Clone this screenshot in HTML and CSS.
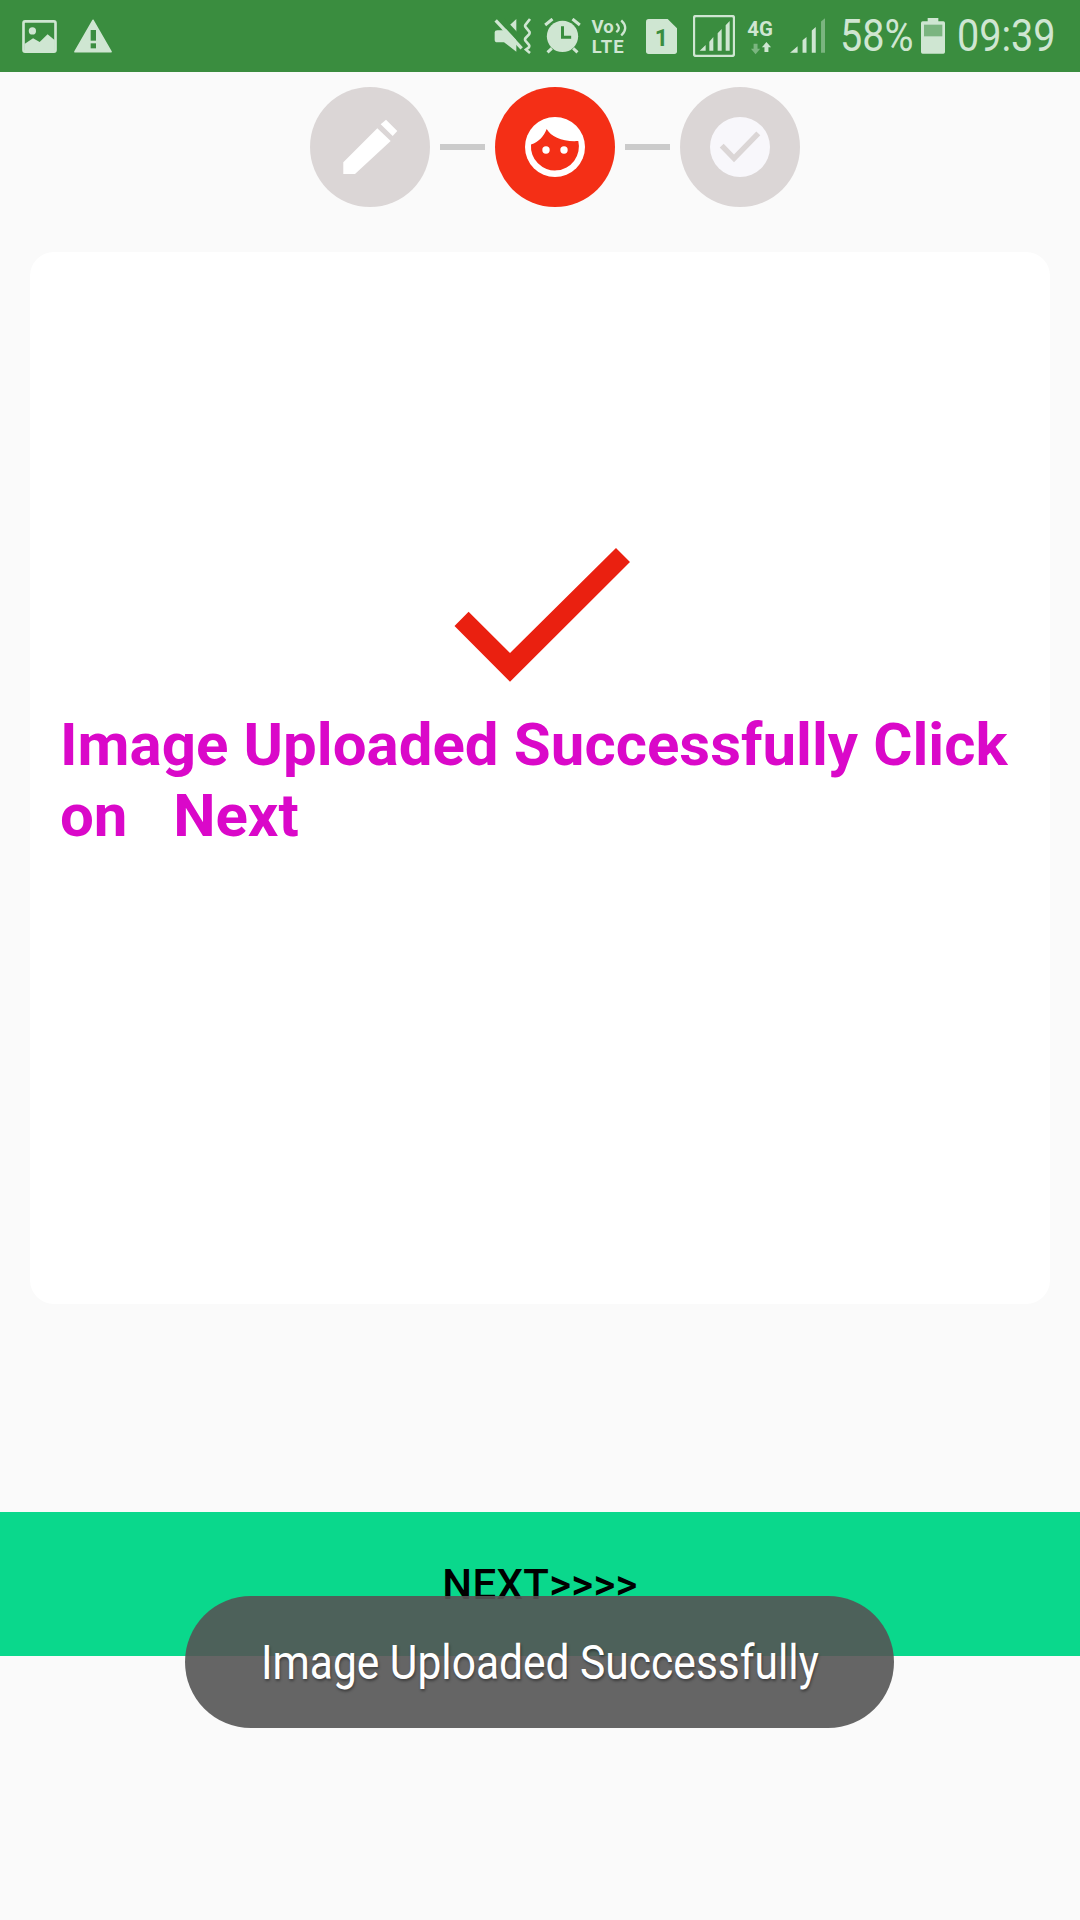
FILE: index.html
```html
<!DOCTYPE html>
<html lang="en">
<head>
    <meta charset="UTF-8">
    <meta name="viewport" content="width=device-width, initial-scale=1.0">
    <title>Upload Image</title>
    <link rel="stylesheet" href="styles.css">
</head>
<body>

<div class="statusbar">
    <div class="status-left">
        <svg class="ic-image" viewBox="65 57 105 100">
            <rect x="69" y="61" width="97" height="92" rx="5" fill="none" stroke="#cfe6d2" stroke-width="8"/>
            <circle cx="96" cy="90" r="11" fill="#cfe6d2"/>
            <path d="M72 130 L98 112 L118 124 L142 100 L164 118 V155 H72 Z" fill="#cfe6d2"/>
        </svg>
        <svg class="ic-warning" viewBox="222 55 114 102">
            <path d="M279 59 L333 153 H225 Z" fill="#cfe6d2" stroke="#cfe6d2" stroke-width="5" stroke-linejoin="round"/>
            <rect x="272" y="88" width="16" height="32" fill="#3a8d3f"/>
            <rect x="272" y="128" width="16" height="15" fill="#3a8d3f"/>
        </svg>
    </div>
    <div class="status-right">
        <svg class="ic-mute" viewBox="45 55 114 108">
            <path d="M47 98 Q47 92 55 92 H75 L112 58 V156 L75 128 H55 Q47 128 47 120 Z" fill="#cfe6d2"/>
            <path d="M58 50 L142 140" stroke="#3a8d3f" stroke-width="18"/>
            <path d="M50 62 L128 146" stroke="#cfe6d2" stroke-width="10"/>
            <path d="M153 58 L139 76 Q137 80 141 84 L151 96 Q153 100 150 104 L139 116 Q137 120 140 124 L150 136 Q152 140 149 144 L141 150 L153 160" fill="none" stroke="#cfe6d2" stroke-width="8"/>
        </svg>
        <svg class="ic-alarm" viewBox="195 55 110 108">
            <circle cx="250" cy="110" r="47" fill="#cfe6d2"/>
            <path d="M250 80 V113 H276" fill="none" stroke="#3a8d3f" stroke-width="9"/>
            <path d="M198 76 L220 58 M302 76 L280 58 M205 158 L218 146 M295 158 L282 146" stroke="#cfe6d2" stroke-width="9"/>
        </svg>
        <svg class="ic-volte" viewBox="335 46 108 130">
            <text x="336" y="100" class="svg-text" font-size="56">Vo</text>
            <path d="M411 72 Q427 85 411 98 M426 62 Q450 85 426 108" fill="none" stroke="#cfe6d2" stroke-width="7"/>
            <text x="337" y="160" class="svg-text lte" font-size="56">LTE</text>
        </svg>
        <svg class="ic-sim" viewBox="500 55 93 105">
            <path d="M508 55 H565 L593 83 V152 Q593 160 585 160 H508 Q500 160 500 152 V63 Q500 55 508 55 Z" fill="#cfe6d2"/>
            <text x="546" y="137" text-anchor="middle" class="svg-text sim-num" font-size="70">1</text>
        </svg>
        <svg class="ic-bars" viewBox="642 45 126 126">
            <rect x="645" y="48" width="120" height="120" rx="6" fill="none" stroke="#cfe6d2" stroke-width="7"/>
            <path d="M662 152 L680 135 V152 Z M691 125 L703 111 V152 H691 Z M716 100 L728 87 V152 H716 Z M740 76 L752 63 V152 H740 Z" fill="#cfe6d2"/>
        </svg>
        <svg class="ic-net" viewBox="803 46 85 124">
            <text x="804" y="105" class="svg-text" font-size="62">4G</text>
            <path d="M823 130 H835 V145 H843 L829 162 L815 145 H823 Z" fill="#7bb580"/>
            <path d="M856 155 H868 V141 H876 L862 125 L848 141 H856 Z" fill="#cfe6d2"/>
        </svg>
        <svg class="ic-signal" viewBox="32 55 106 108">
            <path d="M32 160 L55 140 V160 Z M70 160 V122 L82 112 V160 Z M98 160 V92 L110 82 V160 Z" fill="#cfe6d2"/>
            <path d="M126 160 V65 L138 55 V160 Z" fill="#7bb580"/>
        </svg>
        <span class="battery-text"><span class="narrow">58%</span></span>
        <svg class="ic-battery" viewBox="423 55 72 108">
            <path d="M443 55 H475 V65 H490 Q495 65 495 70 V157 Q495 162 490 162 H428 Q423 162 423 157 V70 Q423 65 428 65 H443 Z" fill="#cfe6d2"/>
            <rect x="432" y="75" width="55" height="35" fill="#7bb580"/>
        </svg>
        <span class="clock"><span class="narrow">09:39</span></span>
    </div>
</div>

<div class="stepper">
    <svg class="step" viewBox="0 0 120 120">
        <circle cx="60" cy="60" r="60" fill="#dbd6d6"/>
        <path d="M33.3 87 V75.3 L67.3 41.3 L80.7 54 L45 87 Z M76 32.7 L87.3 44 L82.7 49 L70.7 37.3 Z" fill="#fff"/>
    </svg>
    <div class="step-line"></div>
    <svg class="step" viewBox="0 0 120 120">
        <circle cx="60" cy="60" r="60" fill="#f42f16"/>
        <circle cx="60" cy="60" r="30" fill="#fff"/>
        <path d="M36 57.5 C44 55 49 49 51.7 42 C56 50 68 55 83.3 54 A24 24 0 1 1 36 57.5 Z" fill="#f42f16"/>
        <circle cx="51" cy="63" r="3.7" fill="#fff"/>
        <circle cx="69" cy="63" r="3.7" fill="#fff"/>
    </svg>
    <div class="step-line"></div>
    <svg class="step" viewBox="0 0 120 120">
        <circle cx="60" cy="60" r="60" fill="#dbd6d6"/>
        <circle cx="60" cy="60" r="30" fill="#f8f7fb"/>
        <path d="M41.7 58.7 L54 71.3 L78.3 46.3" fill="none" stroke="#dbd6d6" stroke-width="5.5"/>
    </svg>
</div>

<div class="card">
    <svg class="done-check" viewBox="0 0 180 138">
        <path d="M4.5 78 L18.6 63.7 L60 105 L166 0 L180 14 L60 133.7 Z" fill="#ea2010"/>
    </svg>
    <p class="done-text">Image Uploaded Successfully Click on   Next</p>
</div>

<button class="next-btn" type="button">NEXT&gt;&gt;&gt;&gt;</button>

<div class="toast"><span class="toast-text">Image Uploaded Successfully</span></div>

</body>
</html>
```

FILE: styles.css
```css
body {
    font-family: Roboto, sans-serif;
    background-color: #fafafa;
    color: #000;
    margin: 0;
    padding: 0;
    width: 1080px;
    height: 1920px;
    overflow: hidden;
    position: relative;
}

/* status bar */
.statusbar {
    height: 72px;
    background-color: #3a8d3f;
    color: #cfe6d2;
    display: flex;
    justify-content: space-between;
    align-items: center;
}
.status-left, .status-right {
    display: flex;
    align-items: center;
}
.status-left {
    padding-left: 22px;
}
.status-right {
    padding-right: 27px;
}
.statusbar svg {
    display: block;
    flex: none;
}
.svg-text {
    font-family: Roboto, sans-serif;
    font-weight: 700;
    fill: #cfe6d2;
}
.lte {
    letter-spacing: 3px;
}
.sim-num {
    fill: #3a8d3f;
}
.ic-image { width: 35px; height: 33px; }
.ic-warning { width: 38px; height: 34px; margin-left: 17px; }
.ic-mute { width: 38px; height: 36px; }
.ic-alarm { width: 37px; height: 36px; margin-left: 12px; }
.ic-volte { width: 36px; height: 43px; margin-left: 10px; }
.ic-sim { width: 31px; height: 35px; margin-left: 19px; }
.ic-bars { width: 42px; height: 42px; margin-left: 16px; }
.ic-net { width: 28px; height: 41px; margin-left: 12px; }
.ic-signal { width: 35px; height: 36px; margin-left: 15px; }
.ic-battery { width: 24px; height: 36px; margin-left: 10px; }
.battery-text, .clock {
    font-size: 45px;
    line-height: 72px;
    display: block;
}
.battery-text { width: 71px; margin-left: 15px; }
.clock { width: 96px; margin-left: 12px; }
.narrow {
    display: inline-block;
    transform: scaleX(0.88);
    transform-origin: left center;
    white-space: nowrap;
}

/* steps */
.stepper {
    display: flex;
    align-items: center;
    padding: 15px 0 0 310px;
}
.step {
    width: 120px;
    height: 120px;
    display: block;
}
.step-line {
    width: 45px;
    height: 6px;
    margin: 0 10px;
    background-color: #cbcbcb;
}

/* main card */
.card {
    box-sizing: border-box;
    height: 1052px;
    margin: 45px 30px 0;
    padding: 296px 30px 0;
    background-color: white;
    border-radius: 24px;
}
.done-check {
    display: block;
    width: 180px;
    height: 138px;
    margin-left: 390px;
}
.done-text {
    margin: 23px 0 0;
    font-size: 60px;
    font-weight: 700;
    line-height: 71px;
    color: #da08c9;
    white-space: pre-wrap;
    word-spacing: 0.3px;
}

.next-btn {
    display: block;
    width: 100%;
    height: 144px;
    margin-top: 208px;
    padding: 0;
    border: none;
    background-color: #0ad88c;
    color: #000;
    font-family: Roboto, sans-serif;
    font-size: 42px;
    font-weight: 500;
    letter-spacing: 0.3px;
}

.toast {
    position: absolute;
    left: 185px;
    top: 1596px;
    width: 709px;
    height: 132px;
    border-radius: 66px;
    background-color: rgba(84, 84, 84, 0.9);
    display: flex;
    align-items: center;
    justify-content: center;
}
.toast-text {
    display: inline-block;
    color: white;
    font-size: 48px;
    white-space: nowrap;
    transform: scaleX(0.886);
    text-shadow: 1px 2px 3px rgba(0, 0, 0, 0.4);
}
```
